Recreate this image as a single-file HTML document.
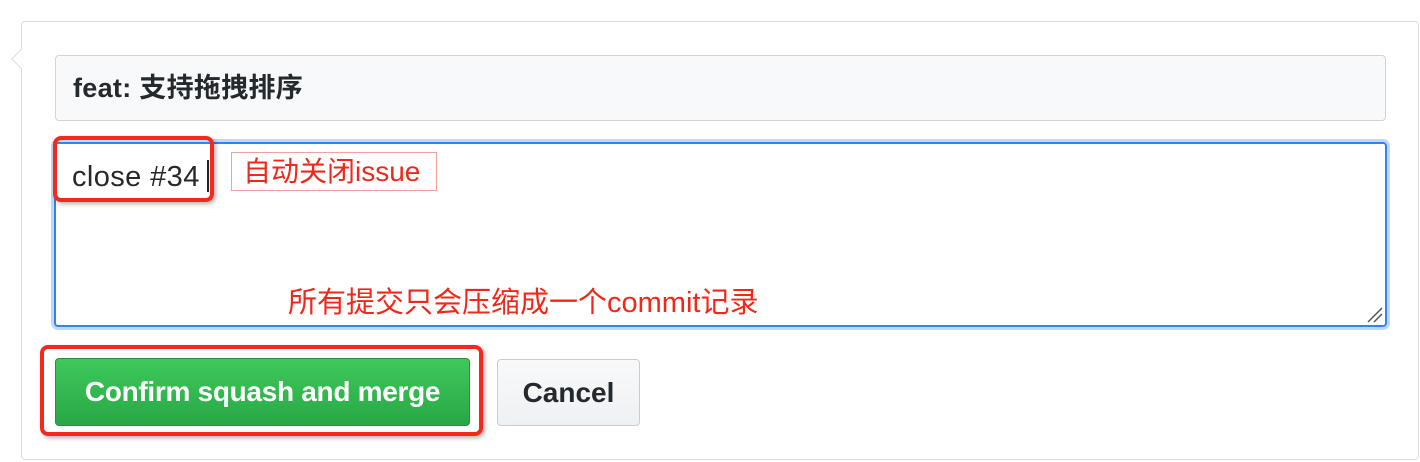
<!DOCTYPE html>
<html><head><meta charset="utf-8"><style>
body{margin:0;width:1420px;height:462px;background:#fff;position:relative;overflow:hidden;font-family:"Liberation Sans","Noto Sans CJK SC",sans-serif}
.a{position:absolute;box-sizing:border-box}
</style></head><body>
<div class="a" style="left:21px;top:21px;width:1398px;height:439px;border:1px solid #dcdcdc;border-radius:4px"></div>
<div class="a" style="left:14px;top:52px;width:14px;height:14px;background:#fff;border-left:1px solid #dcdcdc;border-bottom:1px solid #dcdcdc;transform:rotate(45deg)"></div>
<div class="a" style="left:55px;top:55px;width:1331px;height:66px;background:#f8f9fa;border:1px solid #d1d5da;border-radius:4px;padding-left:17px;line-height:64px;font-size:27px;font-weight:bold;color:#24292e;letter-spacing:0.3px">feat: 支持拖拽排序</div>
<div class="a" style="left:51px;top:139px;width:1339px;height:191px;border:4px solid #c0d8f5;border-radius:7px"></div>
<div class="a" style="left:54px;top:142px;width:1333px;height:185px;border:2px solid #2f85ee;border-radius:4px;background:#fff"></div>
<div class="a" style="left:72px;top:161px;font-size:29px;color:#24292e;letter-spacing:0.4px">close #34</div>
<div class="a" style="left:207px;top:160px;width:2px;height:32px;background:#222"></div>
<div class="a" style="left:53px;top:136px;width:161px;height:66px;border:4px solid #f5281c;border-radius:8px;box-shadow:2px 2px 4px rgba(0,0,0,.3)"></div>
<div class="a" style="left:231px;top:152px;width:206px;height:39px;border:1px solid #f5a0a0;color:#f0281c;font-size:28px;line-height:38px;padding-left:11px;white-space:nowrap">自动关闭issue</div>
<div class="a" style="left:288px;top:279px;color:#f0281c;font-size:29px;white-space:nowrap">所有提交只会压缩成一个commit记录</div>
<svg class="a" style="left:1366px;top:306px" width="18" height="18"><path d="M2 16L16 2M8 16L16 8" stroke="#555" stroke-width="1.5"/></svg>
<div class="a" style="left:55px;top:358px;width:415px;height:68px;background:linear-gradient(#3fc95a,#28a745);border:1px solid #25913f;border-radius:4px;color:#fff;font-weight:bold;font-size:28px;text-align:center;line-height:66px;letter-spacing:-0.3px">Confirm squash and merge</div>
<div class="a" style="left:40px;top:345px;width:443px;height:91px;border:4px solid #f5281c;border-radius:8px;box-shadow:2px 2px 4px rgba(0,0,0,.3)"></div>
<div class="a" style="left:497px;top:359px;width:143px;height:67px;background:linear-gradient(#f8f9fa,#eef1f4);border:1px solid #c9cdd2;border-radius:4px;color:#24292e;font-weight:bold;font-size:28px;text-align:center;line-height:65px">Cancel</div>
</body></html>
